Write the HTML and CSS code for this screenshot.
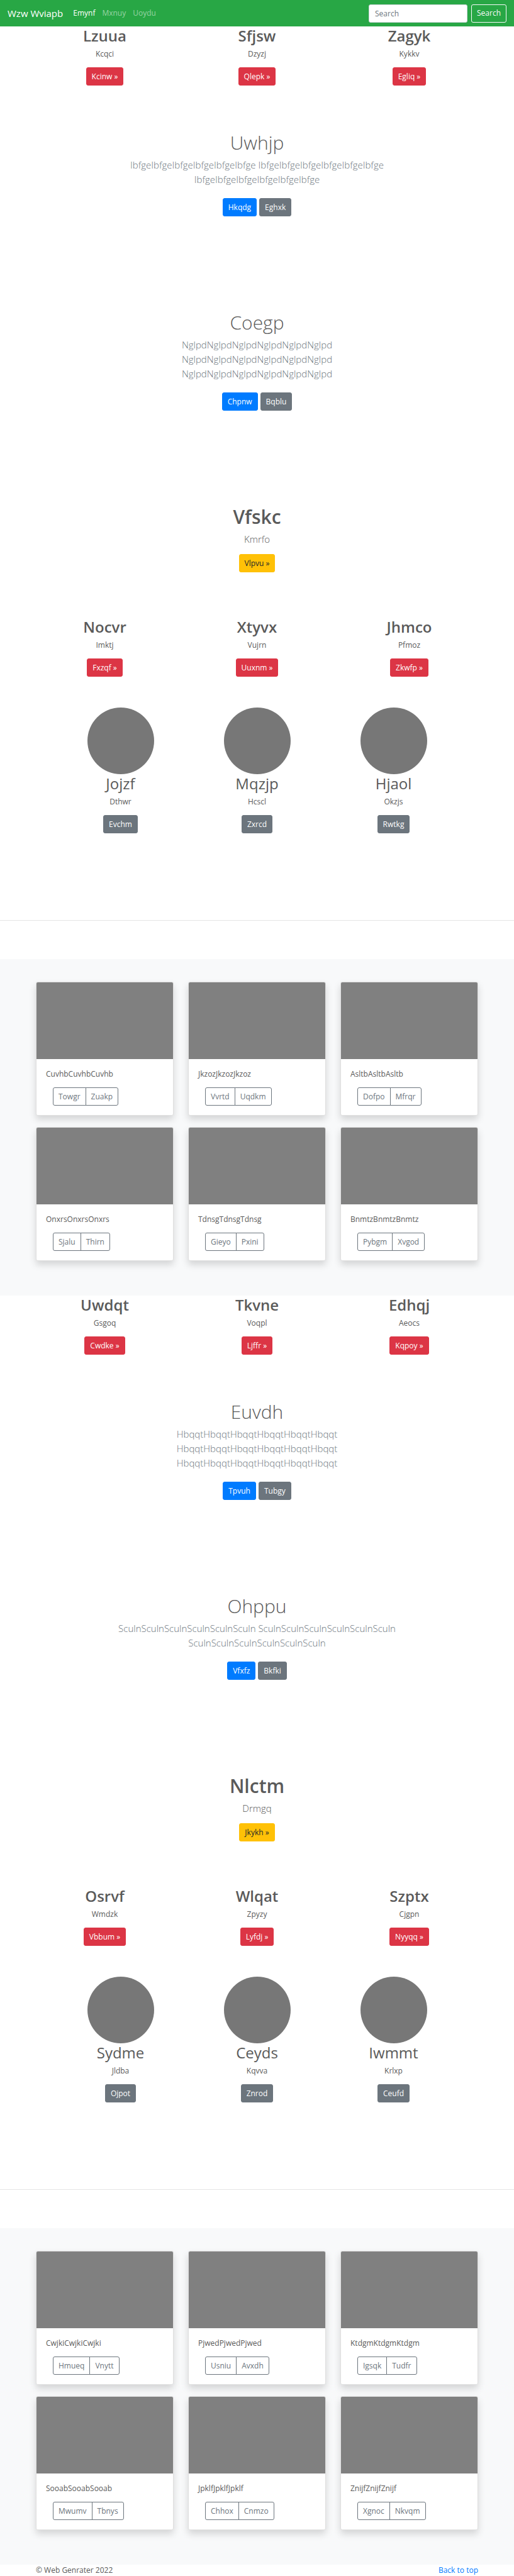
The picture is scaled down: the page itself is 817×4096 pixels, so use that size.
FILE: index.html
```html
<!DOCTYPE html>
<html lang="en">
<head>
<meta charset="utf-8">
<meta name="viewport" content="width=device-width, initial-scale=1">
<title>Wzw Wviapb</title>
<link rel="stylesheet" href="styles.css">
</head>
<body>
<header class="navbar" id="top">
  <a class="brand" href="#">Wzw Wviapb</a>
  <nav class="nav">
    <a class="nav-link active" href="#">Emynf</a>
    <a class="nav-link" href="#">Mxnuy</a>
    <a class="nav-link" href="#">Uoydu</a>
  </nav>
  <form class="search">
    <input class="search-input" type="search" placeholder="Search" aria-label="Search">
    <button class="btn btn-outline-light" type="submit">Search</button>
  </form>
</header>
<main>
  <section class="features">
    <div class="feature"><h2>Lzuua</h2><p>Kcqci</p><a class="btn btn-danger" href="#">Kcinw »</a></div>
    <div class="feature"><h2>Sfjsw</h2><p>Dzyzj</p><a class="btn btn-danger" href="#">Qlepk »</a></div>
    <div class="feature"><h2>Zagyk</h2><p>Kykkv</p><a class="btn btn-danger" href="#">Egliq »</a></div>
  </section>
  <section class="hero hero-first">
    <h1>Uwhjp</h1>
    <p class="lead">IbfgeIbfgeIbfgeIbfgeIbfgeIbfge IbfgeIbfgeIbfgeIbfgeIbfgeIbfge IbfgeIbfgeIbfgeIbfgeIbfgeIbfge</p>
    <div class="actions"><a class="btn btn-primary" href="#">Hkqdg</a><a class="btn btn-secondary" href="#">Eghxk</a></div>
  </section>
  <section class="hero">
    <h1>Coegp</h1>
    <p class="lead">NglpdNglpdNglpdNglpdNglpdNglpd NglpdNglpdNglpdNglpdNglpdNglpd NglpdNglpdNglpdNglpdNglpdNglpd</p>
    <div class="actions"><a class="btn btn-primary" href="#">Chpnw</a><a class="btn btn-secondary" href="#">Bqblu</a></div>
  </section>
  <section class="banner">
    <h1>Vfskc</h1>
    <p class="lead">Kmrfo</p>
    <a class="btn btn-warning" href="#">Vlpvu »</a>
  </section>
  <section class="features">
    <div class="feature"><h2>Nocvr</h2><p>Imktj</p><a class="btn btn-danger" href="#">Fxzqf »</a></div>
    <div class="feature"><h2>Xtyvx</h2><p>Vujrn</p><a class="btn btn-danger" href="#">Uuxnm »</a></div>
    <div class="feature"><h2>Jhmco</h2><p>Pfmoz</p><a class="btn btn-danger" href="#">Zkwfp »</a></div>
  </section>
  <section class="profiles">
    <div class="profile"><div class="avatar"></div><h2>Jojzf</h2><p>Dthwr</p><a class="btn btn-secondary" href="#">Evchm</a></div>
    <div class="profile"><div class="avatar"></div><h2>Mqzjp</h2><p>Hcscl</p><a class="btn btn-secondary" href="#">Zxrcd</a></div>
    <div class="profile"><div class="avatar"></div><h2>Hjaol</h2><p>Okzjs</p><a class="btn btn-secondary" href="#">Rwtkg</a></div>
  </section>
  <hr class="divider">
  <section class="album">
    <div class="cards">
      <article class="card"><div class="thumb"></div><div class="card-body"><p>CuvhbCuvhbCuvhb</p><div class="btn-group"><button class="btn" type="button">Towgr</button><button class="btn" type="button">Zuakp</button></div></div></article>
      <article class="card"><div class="thumb"></div><div class="card-body"><p>JkzozJkzozJkzoz</p><div class="btn-group"><button class="btn" type="button">Vvrtd</button><button class="btn" type="button">Uqdkm</button></div></div></article>
      <article class="card"><div class="thumb"></div><div class="card-body"><p>AsltbAsltbAsltb</p><div class="btn-group"><button class="btn" type="button">Dofpo</button><button class="btn" type="button">Mfrqr</button></div></div></article>
      <article class="card"><div class="thumb"></div><div class="card-body"><p>OnxrsOnxrsOnxrs</p><div class="btn-group"><button class="btn" type="button">Sjalu</button><button class="btn" type="button">Thirn</button></div></div></article>
      <article class="card"><div class="thumb"></div><div class="card-body"><p>TdnsgTdnsgTdnsg</p><div class="btn-group"><button class="btn" type="button">Gieyo</button><button class="btn" type="button">Pxini</button></div></div></article>
      <article class="card"><div class="thumb"></div><div class="card-body"><p>BnmtzBnmtzBnmtz</p><div class="btn-group"><button class="btn" type="button">Pybgm</button><button class="btn" type="button">Xvgod</button></div></div></article>
    </div>
  </section>
  <section class="features">
    <div class="feature"><h2>Uwdqt</h2><p>Gsgoq</p><a class="btn btn-danger" href="#">Cwdke »</a></div>
    <div class="feature"><h2>Tkvne</h2><p>Voqpl</p><a class="btn btn-danger" href="#">Ljffr »</a></div>
    <div class="feature"><h2>Edhqj</h2><p>Aeocs</p><a class="btn btn-danger" href="#">Kqpoy »</a></div>
  </section>
  <section class="hero hero-first">
    <h1>Euvdh</h1>
    <p class="lead">HbqqtHbqqtHbqqtHbqqtHbqqtHbqqt HbqqtHbqqtHbqqtHbqqtHbqqtHbqqt HbqqtHbqqtHbqqtHbqqtHbqqtHbqqt</p>
    <div class="actions"><a class="btn btn-primary" href="#">Tpvuh</a><a class="btn btn-secondary" href="#">Tubgy</a></div>
  </section>
  <section class="hero">
    <h1>Ohppu</h1>
    <p class="lead">SculnSculnSculnSculnSculnSculn SculnSculnSculnSculnSculnSculn SculnSculnSculnSculnSculnSculn</p>
    <div class="actions"><a class="btn btn-primary" href="#">Vfxfz</a><a class="btn btn-secondary" href="#">Bkfki</a></div>
  </section>
  <section class="banner">
    <h1>Nlctm</h1>
    <p class="lead">Drmgq</p>
    <a class="btn btn-warning" href="#">Jkykh »</a>
  </section>
  <section class="features">
    <div class="feature"><h2>Osrvf</h2><p>Wmdzk</p><a class="btn btn-danger" href="#">Vbbum »</a></div>
    <div class="feature"><h2>Wlqat</h2><p>Zpyzy</p><a class="btn btn-danger" href="#">Lyfdj »</a></div>
    <div class="feature"><h2>Szptx</h2><p>Cjgpn</p><a class="btn btn-danger" href="#">Nyyqq »</a></div>
  </section>
  <section class="profiles">
    <div class="profile"><div class="avatar"></div><h2>Sydme</h2><p>Jldba</p><a class="btn btn-secondary" href="#">Ojpot</a></div>
    <div class="profile"><div class="avatar"></div><h2>Ceyds</h2><p>Kqvva</p><a class="btn btn-secondary" href="#">Znrod</a></div>
    <div class="profile"><div class="avatar"></div><h2>Iwmmt</h2><p>Krlxp</p><a class="btn btn-secondary" href="#">Ceufd</a></div>
  </section>
  <hr class="divider">
  <section class="album">
    <div class="cards">
      <article class="card"><div class="thumb"></div><div class="card-body"><p>CwjkiCwjkiCwjki</p><div class="btn-group"><button class="btn" type="button">Hmueq</button><button class="btn" type="button">Vnytt</button></div></div></article>
      <article class="card"><div class="thumb"></div><div class="card-body"><p>PjwedPjwedPjwed</p><div class="btn-group"><button class="btn" type="button">Usniu</button><button class="btn" type="button">Avxdh</button></div></div></article>
      <article class="card"><div class="thumb"></div><div class="card-body"><p>KtdgmKtdgmKtdgm</p><div class="btn-group"><button class="btn" type="button">Igsqk</button><button class="btn" type="button">Tudfr</button></div></div></article>
      <article class="card"><div class="thumb"></div><div class="card-body"><p>SooabSooabSooab</p><div class="btn-group"><button class="btn" type="button">Mwumv</button><button class="btn" type="button">Tbnys</button></div></div></article>
      <article class="card"><div class="thumb"></div><div class="card-body"><p>JpklfJpklfJpklf</p><div class="btn-group"><button class="btn" type="button">Chhox</button><button class="btn" type="button">Cnmzo</button></div></div></article>
      <article class="card"><div class="thumb"></div><div class="card-body"><p>ZnijfZnijfZnijf</p><div class="btn-group"><button class="btn" type="button">Xgnoc</button><button class="btn" type="button">Nkvqm</button></div></div></article>
    </div>
  </section>
</main>
<footer class="footer">
  <span>© Web Genrater 2022</span>
  <a href="#top">Back to top</a>
</footer>
</body>
</html>
```

FILE: styles.css
```css
*, *::before, *::after { box-sizing: border-box; }

body {
  margin: 0;
  background: #fff;
  color: #5a5a5a;
  font-family: "Open Sans", "Noto Sans", sans-serif;
  font-size: 12px;
  line-height: 18px;
}

h1, h2, p { margin: 0; }
a { color: #007bff; text-decoration: none; }

h1 { font-size: 30px; line-height: 36px; font-weight: 300; margin-bottom: 6px; }
h2 { font-size: 24px; line-height: 29px; font-weight: 400; margin-bottom: 6px; }

/* Buttons */
.btn {
  display: inline-flex;
  align-items: center;
  justify-content: center;
  height: 29px;
  padding: 0 8px;
  border: 1px solid transparent;
  border-radius: 3px;
  background: transparent;
  color: #fff;
  font: inherit;
}
.btn-primary { background: #007bff; border-color: #007bff; }
.btn-secondary { background: #6c757d; border-color: #6c757d; }
.btn-danger { background: #dc3545; border-color: #dc3545; }
.btn-warning { background: #ffc107; border-color: #ffc107; color: #212529; }
.btn-outline-light { border-color: #f8f9fa; color: #f8f9fa; }

/* Navbar */
.navbar {
  display: flex;
  align-items: center;
  height: 42px;
  padding: 0 12px;
  background: #28a745;
}
.brand { color: #fff; font-size: 15px; }
.nav { display: flex; gap: 11px; margin-left: 16px; }
.nav-link { color: rgba(255, 255, 255, .5); }
.nav-link.active { color: #fff; }
.search { display: flex; gap: 6px; margin-left: auto; }
.search-input {
  width: 157px;
  height: 29px;
  padding: 0 9px;
  border: 1px solid #ced4da;
  border-radius: 3px;
  background: #fff;
  color: #495057;
  font: inherit;
}
.search-input::placeholder { color: #6c757d; opacity: 1; }

/* Three-column features */
.features {
  display: grid;
  grid-template-columns: repeat(3, 1fr);
  max-width: 726px;
  margin: 0 auto;
}
.feature, .profile { display: flex; flex-direction: column; align-items: center; }
.feature h2 { font-weight: 600; }
.feature p, .profile p { margin-bottom: 12px; }

/* Centred hero text */
.hero, .banner {
  display: flex;
  flex-direction: column;
  align-items: center;
  max-width: 464px;
  margin: 151px auto 0;
  text-align: center;
}
.hero-first { margin-top: 73px; }
.lead { font-size: 15px; line-height: 23px; font-weight: 300; }
.hero .lead { color: #6c757d; margin-bottom: 18px; }
.actions { display: flex; gap: 4px; }
.banner { margin-bottom: 72px; }
.banner h1 { font-weight: 600; }
.banner .lead { margin-bottom: 12px; }

/* Profiles */
.profiles {
  display: grid;
  grid-template-columns: repeat(3, 1fr);
  max-width: 651px;
  margin: 49px auto 138px;
}
.avatar { width: 106px; height: 106px; border-radius: 50%; background: #777; }

.divider { margin: 0 0 61px; border: 0; border-top: 1px solid #e5e5e5; }

/* Card album */
.album { padding: 36px 24px 55px; background: #f8f9fa; }
.cards {
  display: grid;
  grid-template-columns: repeat(3, 1fr);
  gap: 18px 23px;
  max-width: 703px;
  margin: 0 auto;
}
.card {
  border: 1px solid #dfdfdf;
  border-radius: 3px;
  background: #fff;
  box-shadow: 0 6px 12px rgba(0, 0, 0, .15);
}
.thumb { height: 122px; border-radius: 2px 2px 0 0; background: #808080; }
.card-body { padding: 15px; }
.card-body p { margin-bottom: 12px; }
.btn-group { display: flex; padding-left: 11px; }
.btn-group .btn { border-color: #6c757d; color: #6c757d; }
.btn-group .btn:first-child { border-radius: 3px 0 0 3px; }
.btn-group .btn:last-child { border-radius: 0 3px 3px 0; margin-left: -1px; }

/* Footer */
.footer {
  display: flex;
  justify-content: space-between;
  max-width: 703px;
  margin: 0 auto;
}
```
